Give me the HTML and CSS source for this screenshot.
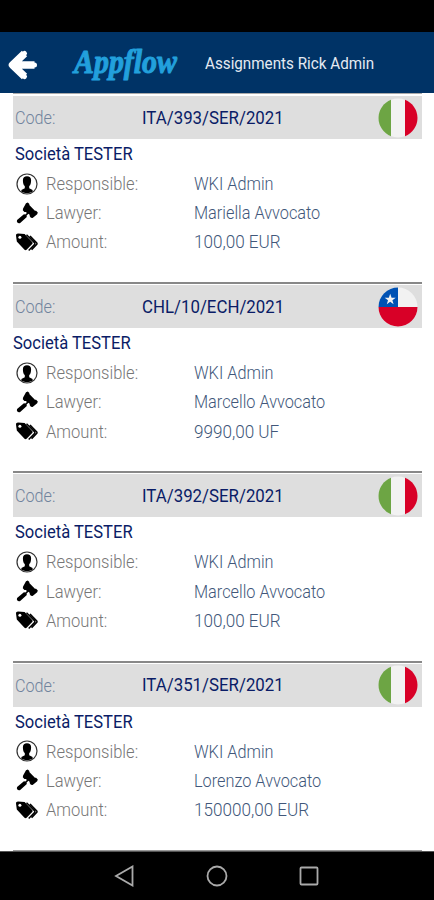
FILE: index.html
```html
<!DOCTYPE html>
<html lang="en">
<head>
    <meta charset="utf-8">
    <title>Appflow - Assignments</title>
    <link rel="stylesheet" href="styles.css">
</head>
<body>
    <!-- shared icons -->
    <svg class="sprite" width="0" height="0">
        <symbol id="user" viewBox="0 0 22 22">
            <circle cx="11" cy="11" r="10" fill="#fff" stroke="#333" stroke-width="1.200"/>
            <path d="M6.900 7.200c0-2.500 1.500-3.900 4.100-3.900s4.100 1.400 4.100 3.900c0 2.600-.5 4.800-1.900 5.900v2.200l3.400 1.700v1.800c-3.200 1.900-8 1.900-11.200 0V17l3.400-1.700v-2.200C7.400 12 6.900 9.800 6.900 7.200z"/>
        </symbol>
        <symbol id="gavel" viewBox="0 0 22 22">
            <path d="M10 1.300l1.800-.9 1.600 1.700-.1 1 5.600 5.700 1.200-.1 1.700 1.900-.6 1.700-4.600 3.700-1.700-.3-1.300-1.600.2-1.200-1.300-1.200-1.900 1.700.2 1.600-6.600 6c-2 1-4.100-1-3.100-3l6.800-5.700 1.500.2 1.500-1.500-1-1.100-1.500.1-1.600-1.800.3-1.800z"/>
        </symbol>
        <symbol id="tags" viewBox="0 0 22 20">
            <path d="M0 3.400C0 2.300.8 1.600 2 1.600l6.600.5 7.600 7.900c.6.700.6 1.500 0 2.100l-5.600 5.600c-.7.6-1.400.6-2.100 0L.8 9.600z"/>
            <circle cx="3.900" cy="5.200" r="1.500" fill="#fff"/>
            <path d="M10.500 2.800l8 8c.5.600.5 1.200 0 1.700l-5.800 6M14 4l6.600 6.800c.5.600.5 1.200 0 1.700l-5 5.300" fill="none" stroke="#000" stroke-width="1.500"/>
        </symbol>
        <symbol id="italy" viewBox="0 0 40 40">
            <circle cx="20" cy="20" r="19.500" fill="#f2f2f2"/>
            <path d="M13 1.800a19.500 19.500 0 0 0 0 36.400z" fill="#6da544"/>
            <path d="M27 1.800a19.500 19.500 0 0 1 0 36.400z" fill="#d80027"/>
        </symbol>
        <symbol id="chile" viewBox="0 0 40 40">
            <circle cx="20" cy="20" r="19.500" fill="#f2f2f2"/>
            <path d="M.5 20a19.500 19.500 0 0 0 39 0z" fill="#d80027"/>
            <path d="M.5 20A19.500 19.500 0 0 1 20 .5V20z" fill="#0052b4"/>
            <path d="M12.200 6.800l1.400 3.900h4.100l-3.300 2.500 1.200 4-3.400-2.400-3.400 2.400 1.200-4-3.300-2.500h4.100z" fill="#f2f2f2"/>
        </symbol>
    </svg>

    <div class="status-bar"></div>

    <header class="header">
        <svg class="back" viewBox="0 0 32 34">
            <path d="M28 17H8M18 5.500L6 17l12 11.500" fill="none" stroke="#fff" stroke-width="7.500" stroke-linejoin="round"/>
            <path d="M28 17H8M18 5.500L6 17l12 11.500" fill="none" stroke="#fff" stroke-width="5" stroke-linecap="round"/>
        </svg>
        <svg class="logo" viewBox="0 0 108 40">
            <text x="2" y="28" textLength="103" lengthAdjust="spacingAndGlyphs">Appflow</text>
        </svg>
        <h1 class="title"><span>Assignments Rick Admin</span></h1>
    </header>

    <main class="list">
        <section class="card">
            <div class="code">
                <span class="label">Code:</span>
                <span class="number">ITA/393/SER/2021</span>
                <svg class="flag"><use href="#italy"/></svg>
            </div>
            <h2 class="company"><span>Società TESTER</span></h2>
            <div class="row">
                <svg class="icon"><use href="#user"/></svg>
                <span class="label">Responsible:</span>
                <span class="value">WKI Admin</span>
            </div>
            <div class="row">
                <svg class="icon"><use href="#gavel"/></svg>
                <span class="label">Lawyer:</span>
                <span class="value">Mariella Avvocato</span>
            </div>
            <div class="row">
                <svg class="icon"><use href="#tags"/></svg>
                <span class="label">Amount:</span>
                <span class="value amount">100,00 EUR</span>
            </div>
        </section>

        <section class="card">
            <div class="code">
                <span class="label">Code:</span>
                <span class="number">CHL/10/ECH/2021</span>
                <svg class="flag"><use href="#chile"/></svg>
            </div>
            <h2 class="company outdent"><span>Società TESTER</span></h2>
            <div class="row">
                <svg class="icon"><use href="#user"/></svg>
                <span class="label">Responsible:</span>
                <span class="value">WKI Admin</span>
            </div>
            <div class="row">
                <svg class="icon"><use href="#gavel"/></svg>
                <span class="label">Lawyer:</span>
                <span class="value">Marcello Avvocato</span>
            </div>
            <div class="row">
                <svg class="icon"><use href="#tags"/></svg>
                <span class="label">Amount:</span>
                <span class="value amount">9990,00 UF</span>
            </div>
        </section>

        <section class="card">
            <div class="code">
                <span class="label">Code:</span>
                <span class="number">ITA/392/SER/2021</span>
                <svg class="flag"><use href="#italy"/></svg>
            </div>
            <h2 class="company"><span>Società TESTER</span></h2>
            <div class="row">
                <svg class="icon"><use href="#user"/></svg>
                <span class="label">Responsible:</span>
                <span class="value">WKI Admin</span>
            </div>
            <div class="row">
                <svg class="icon"><use href="#gavel"/></svg>
                <span class="label">Lawyer:</span>
                <span class="value">Marcello Avvocato</span>
            </div>
            <div class="row">
                <svg class="icon"><use href="#tags"/></svg>
                <span class="label">Amount:</span>
                <span class="value amount">100,00 EUR</span>
            </div>
        </section>

        <section class="card">
            <div class="code">
                <span class="label">Code:</span>
                <span class="number">ITA/351/SER/2021</span>
                <svg class="flag"><use href="#italy"/></svg>
            </div>
            <h2 class="company"><span>Società TESTER</span></h2>
            <div class="row">
                <svg class="icon"><use href="#user"/></svg>
                <span class="label">Responsible:</span>
                <span class="value">WKI Admin</span>
            </div>
            <div class="row">
                <svg class="icon"><use href="#gavel"/></svg>
                <span class="label">Lawyer:</span>
                <span class="value">Lorenzo Avvocato</span>
            </div>
            <div class="row">
                <svg class="icon"><use href="#tags"/></svg>
                <span class="label">Amount:</span>
                <span class="value amount">150000,00 EUR</span>
            </div>
        </section>
        <div class="list-end"></div>
    </main>

    <nav class="nav-bar">
        <svg viewBox="0 0 22 22"><path d="M18.500 1.500v19L2 11z"/></svg>
        <svg viewBox="0 0 22 22"><circle cx="11" cy="11" r="9.500"/></svg>
        <svg viewBox="0 0 22 22"><rect x="2.500" y="2.500" width="17" height="17" rx="1"/></svg>
    </nav>
</body>
</html>
```

FILE: styles.css
```css
* {
    box-sizing: border-box;
}

body {
    margin: 0;
    height: 900px;
    display: flex;
    flex-direction: column;
    overflow: hidden;
    background: #fff;
    font-family: Roboto, "Liberation Sans", sans-serif;
    font-size: 18px;
    font-weight: 300;
}

h1, h2 {
    margin: 0;
    font-weight: 400;
}

.sprite {
    position: absolute;
}

.status-bar {
    flex: none;
    height: 32px;
    background: #000;
}

.header {
    flex: none;
    display: flex;
    align-items: center;
    height: 61px;
    padding-left: 6px;
    background: #003366;
}

.back {
    width: 33px;
    height: 34px;
    margin-top: 4px;
}

.logo {
    width: 108px;
    height: 40px;
    margin: 4px 0 0 33px;
    overflow: visible;
}

.logo text {
    font-family: "Liberation Serif", serif;
    font-size: 33px;
    font-weight: bold;
    font-style: italic;
    fill: #22a0dc;
    stroke: #22a0dc;
    stroke-width: 1;
    stroke-linejoin: round;
}

.title {
    margin-left: 25px;
    color: #e4eaf2;
    font-size: 17px;
    line-height: 24px;
    white-space: nowrap;
}

.title span,
.number,
.company span,
.label,
.value {
    display: inline-block;
    transform-origin: left center;
    white-space: nowrap;
}

.title span {
    transform: scaleX(0.895);
}

.list {
    flex: none;
    height: 758px;
    padding: 0 12px 0 13px;
}

.card {
    height: 189.2px;
    border-top: 1px solid #aaa;
}

.card + .card {
    border-top: 2px solid #888;
}

.code {
    display: grid;
    grid-template-columns: 126px 1fr 40px;
    align-items: center;
    height: 43px;
    margin-top: 2px;
    padding: 0 4px 0 3px;
    background: #dedede;
}

.card + .card .code {
    margin-top: 1px;
}

.code .label {
    color: #71849d;
    transform: translateX(-1px) scaleX(0.9);
}

.number {
    color: #0a1c66;
    font-size: 18.5px;
    font-weight: 400;
    transform: scaleX(0.91);
}

.flag {
    width: 40px;
    height: 40px;
}

.company {
    height: 30px;
    padding-left: 2px;
    color: #0a1c66;
    font-size: 18px;
    line-height: 30px;
}

.company.outdent {
    padding-left: 0;
}

.company span {
    transform: scaleX(0.92);
}

.row {
    display: grid;
    grid-template-columns: 30px 148px 1fr;
    align-items: center;
    height: 29.2px;
    padding-left: 3px;
}

.icon {
    width: 22px;
    height: 22px;
}

.row .label {
    color: #777;
    transform: scaleX(0.92);
}

.value {
    color: #41577a;
    transform: scaleX(0.905);
}

.value.amount {
    transform: scaleX(0.95);
}

.list-end {
    height: 2px;
    background: #999;
}

.nav-bar {
    flex: 1;
    display: flex;
    justify-content: center;
    align-items: center;
    gap: 70px;
    background: #000;
    border-top: 1px solid #555;
}

.nav-bar svg {
    width: 22px;
    height: 22px;
    fill: none;
    stroke: #aaa;
    stroke-width: 1.8;
}
```
